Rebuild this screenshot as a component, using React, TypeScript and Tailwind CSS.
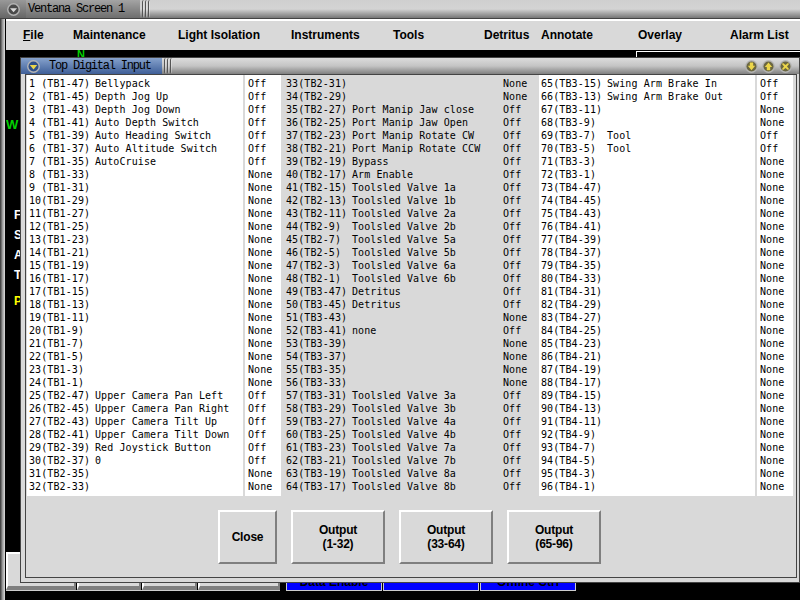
type Row = [string, string, string];

const col1: Row[] = [
  ["1 (TB1-47)", "Bellypack", "Off"],
  ["2 (TB1-45)", "Depth Jog Up", "Off"],
  ["3 (TB1-43)", "Depth Jog Down", "Off"],
  ["4 (TB1-41)", "Auto Depth Switch", "Off"],
  ["5 (TB1-39)", "Auto Heading Switch", "Off"],
  ["6 (TB1-37)", "Auto Altitude Switch", "Off"],
  ["7 (TB1-35)", "AutoCruise", "Off"],
  ["8 (TB1-33)", "", "None"],
  ["9 (TB1-31)", "", "None"],
  ["10(TB1-29)", "", "None"],
  ["11(TB1-27)", "", "None"],
  ["12(TB1-25)", "", "None"],
  ["13(TB1-23)", "", "None"],
  ["14(TB1-21)", "", "None"],
  ["15(TB1-19)", "", "None"],
  ["16(TB1-17)", "", "None"],
  ["17(TB1-15)", "", "None"],
  ["18(TB1-13)", "", "None"],
  ["19(TB1-11)", "", "None"],
  ["20(TB1-9)", "", "None"],
  ["21(TB1-7)", "", "None"],
  ["22(TB1-5)", "", "None"],
  ["23(TB1-3)", "", "None"],
  ["24(TB1-1)", "", "None"],
  ["25(TB2-47)", "Upper Camera Pan Left", "Off"],
  ["26(TB2-45)", "Upper Camera Pan Right", "Off"],
  ["27(TB2-43)", "Upper Camera Tilt Up", "Off"],
  ["28(TB2-41)", "Upper Camera Tilt Down", "Off"],
  ["29(TB2-39)", "Red Joystick Button", "Off"],
  ["30(TB2-37)", "0", "Off"],
  ["31(TB2-35)", "", "None"],
  ["32(TB2-33)", "", "None"],
];

const col2: Row[] = [
  ["33(TB2-31)", "", "None"],
  ["34(TB2-29)", "", "None"],
  ["35(TB2-27)", "Port Manip Jaw close", "Off"],
  ["36(TB2-25)", "Port Manip Jaw Open", "Off"],
  ["37(TB2-23)", "Port Manip Rotate CW", "Off"],
  ["38(TB2-21)", "Port Manip Rotate CCW", "Off"],
  ["39(TB2-19)", "Bypass", "Off"],
  ["40(TB2-17)", "Arm Enable", "Off"],
  ["41(TB2-15)", "Toolsled Valve 1a", "Off"],
  ["42(TB2-13)", "Toolsled Valve 1b", "Off"],
  ["43(TB2-11)", "Toolsled Valve 2a", "Off"],
  ["44(TB2-9)", "Toolsled Valve 2b", "Off"],
  ["45(TB2-7)", "Toolsled Valve 5a", "Off"],
  ["46(TB2-5)", "Toolsled Valve 5b", "Off"],
  ["47(TB2-3)", "Toolsled Valve 6a", "Off"],
  ["48(TB2-1)", "Toolsled Valve 6b", "Off"],
  ["49(TB3-47)", "Detritus", "Off"],
  ["50(TB3-45)", "Detritus", "Off"],
  ["51(TB3-43)", "", "None"],
  ["52(TB3-41)", "none", "Off"],
  ["53(TB3-39)", "", "None"],
  ["54(TB3-37)", "", "None"],
  ["55(TB3-35)", "", "None"],
  ["56(TB3-33)", "", "None"],
  ["57(TB3-31)", "Toolsled Valve 3a", "Off"],
  ["58(TB3-29)", "Toolsled Valve 3b", "Off"],
  ["59(TB3-27)", "Toolsled Valve 4a", "Off"],
  ["60(TB3-25)", "Toolsled Valve 4b", "Off"],
  ["61(TB3-23)", "Toolsled Valve 7a", "Off"],
  ["62(TB3-21)", "Toolsled Valve 7b", "Off"],
  ["63(TB3-19)", "Toolsled Valve 8a", "Off"],
  ["64(TB3-17)", "Toolsled Valve 8b", "Off"],
];

const col3: Row[] = [
  ["65(TB3-15)", "Swing Arm Brake In", "Off"],
  ["66(TB3-13)", "Swing Arm Brake Out", "Off"],
  ["67(TB3-11)", "", "None"],
  ["68(TB3-9)", "", "None"],
  ["69(TB3-7)", "Tool", "Off"],
  ["70(TB3-5)", "Tool", "Off"],
  ["71(TB3-3)", "", "None"],
  ["72(TB3-1)", "", "None"],
  ["73(TB4-47)", "", "None"],
  ["74(TB4-45)", "", "None"],
  ["75(TB4-43)", "", "None"],
  ["76(TB4-41)", "", "None"],
  ["77(TB4-39)", "", "None"],
  ["78(TB4-37)", "", "None"],
  ["79(TB4-35)", "", "None"],
  ["80(TB4-33)", "", "None"],
  ["81(TB4-31)", "", "None"],
  ["82(TB4-29)", "", "None"],
  ["83(TB4-27)", "", "None"],
  ["84(TB4-25)", "", "None"],
  ["85(TB4-23)", "", "None"],
  ["86(TB4-21)", "", "None"],
  ["87(TB4-19)", "", "None"],
  ["88(TB4-17)", "", "None"],
  ["89(TB4-15)", "", "None"],
  ["90(TB4-13)", "", "None"],
  ["91(TB4-11)", "", "None"],
  ["92(TB4-9)", "", "None"],
  ["93(TB4-7)", "", "None"],
  ["94(TB4-5)", "", "None"],
  ["95(TB4-3)", "", "None"],
  ["96(TB4-1)", "", "None"],
];

// widths are the distance to the next menu title
const menus = [
  { label: "Maintenance", w: "w-[105px]" },
  { label: "Light Isolation", w: "w-[113px]" },
  { label: "Instruments", w: "w-[102px]" },
  { label: "Tools", w: "w-[91px]" },
  { label: "Detritus", w: "w-[57px]" },
  { label: "Annotate", w: "w-[97px]" },
  { label: "Overlay", w: "w-[92px]" },
  { label: "Alarm List", w: "w-[65px]" },
];

const raised = "bg-[#d9d9d9] border-2 border-t-white border-l-white border-r-[#7f7f7f] border-b-[#7f7f7f]";

function Ridges() {
  return (
    <div className="flex h-full items-center gap-[1px] ml-[2px]">
      <div className="w-[2px] h-full rounded-l-full border-l border-[#555] bg-white/30" />
      <div className="w-[2px] h-full rounded-l-full border-l border-[#555] bg-white/30" />
      <div className="w-[2px] h-full rounded-l-full border-l border-[#555] bg-white/30" />
    </div>
  );
}

function WinButton({ kind }: { kind: "down" | "up" | "close" | "menu" | "grey" }) {
  const inner = kind === "grey" ? "#4a4a4a" : kind === "menu" ? "#2f4f88" : "#6a6640";
  return (
    <svg width="13" height="13" viewBox="0 0 13 13">
      <circle cx="6.5" cy="6.5" r="6.4" fill="#b4b4b4" />
      <circle cx="6.5" cy="6.5" r="5" fill={inner} />
      {kind === "down" && <path d="M4.8 2.5h3.4v3.2h2L6.5 10.2 2.8 5.7h2z" fill="#ecd64a" />}
      {kind === "up" && <path d="M6.5 2.6l3.7 4.5h-2v3.2H4.8V7.1h-2z" fill="#ecd64a" />}
      {kind === "close" && <path d="M4 3l2.5 2 2.5-2 1 1-2 2.5 2 2.5-1 1-2.5-2-2.5 2-1-1 2-2.5-2-2.5z" fill="#ecd64a" />}
      {kind === "menu" && <path d="M2.8 5h7.4l-3.7 4.4z" fill="#ecd64a" />}
      {kind === "grey" && <path d="M3 5.2h7L6.5 9.2z" fill="#d8d8d8" />}
    </svg>
  );
}

function SignalList({ rows, textBox, statusBox }: { rows: Row[]; textBox: string; statusBox: string }) {
  return (
    <div className="flex gap-[2px] shrink-0">
      <div className={`${textBox} h-[421px] pt-[2px]`}>
        {rows.map((r) => (
          <div key={r[0]} className="flex h-[13px] items-center whitespace-pre">
            <span className="w-[66px] shrink-0">{r[0]}</span>
            <span>{r[1]}</span>
          </div>
        ))}
      </div>
      <div className={`${statusBox} h-[421px] pt-[2px]`}>
        {rows.map((r) => (
          <div key={r[0]} className="flex h-[13px] items-center">
            {r[2]}
          </div>
        ))}
      </div>
    </div>
  );
}

function DialogButton({ label, w }: { label: string; w: string }) {
  return (
    <button className={`${w} h-[54px] ${raised} text-[12px] leading-[14px] tracking-[-0.2px] font-bold text-black whitespace-pre-line text-center`}>
      {label}
    </button>
  );
}

export default function App() {
  return (
    <div className="relative w-[800px] h-[600px] overflow-hidden bg-black font-['Liberation_Sans',sans-serif]">
      {/* main window frame */}
      <div className="absolute left-0 top-0 w-[5px] h-[600px] bg-gradient-to-r from-[#333] via-[#999] to-[#ddd]" />

      <div className="absolute left-0 top-0 w-[800px] flex flex-col">
        <div className="h-[19px] flex items-center border-b border-[#444] bg-gradient-to-b from-[#cfcfcf] via-[#d4d4d4] to-[#777]">
          <div className="w-[26px] h-full bg-gradient-to-b from-[#999] to-[#666] flex items-center justify-center">
            <WinButton kind="grey" />
          </div>
          <div className="w-[114px] h-full bg-gradient-to-b from-[#a4a4a4] to-[#6e6e6e] text-[12px] text-black flex items-center font-['Liberation_Mono',monospace] tracking-[-1.2px] whitespace-pre pl-[2px]">
            Ventana Screen 1
          </div>
          <Ridges />
        </div>
        <div className="ml-[6px] h-[31px] bg-[#d9d9d9] border-t-2 border-white flex items-center pl-[17px] pb-[2px] text-[12px] font-bold text-black">
          <span className="w-[50px] shrink-0">
            <span className="underline">F</span>ile
          </span>
          {menus.map((m) => (
            <span key={m.label} className={`${m.w} shrink-0 whitespace-nowrap`}>
              {m.label}
            </span>
          ))}
        </div>
      </div>
      <div className="absolute left-[636px] top-[51px] w-[164px] h-[6px] border-t border-l border-white" />

      {/* instrument labels behind the dialog */}
      <span className="absolute left-[77px] top-[51px] h-[6px] text-[11px] font-bold text-[#00d000] leading-[6px]">N</span>
      <span className="absolute left-[6px] top-[118px] text-[13px] font-bold text-[#00d000] leading-none">W</span>
      <span className="absolute left-[14px] top-[209px] text-[12px] font-bold text-white leading-none">F</span>
      <span className="absolute left-[14px] top-[229px] text-[12px] font-bold text-white leading-none">S</span>
      <span className="absolute left-[14px] top-[249px] text-[12px] font-bold text-white leading-none">A</span>
      <span className="absolute left-[14px] top-[269px] text-[12px] font-bold text-white leading-none">T</span>
      <span className="absolute left-[14px] top-[295px] text-[12px] font-bold text-[#ffff00] leading-none">P</span>

      {/* bottom panels, mostly covered by the dialog */}
      <div className="absolute left-[6px] top-[552px] w-[274px] h-[39px] flex gap-[1px] border-b border-[#ccc]">
        <div className={`w-[70px] ${raised} border-b-4`} />
        <div className={`w-[64px] ${raised} border-b-4`} />
        <div className={`w-[55px] ${raised} border-b-4`} />
        <div className={`w-[82px] ${raised} border-b-4`} />
      </div>
      <div className="absolute left-[286px] top-[570px] h-[21px] flex gap-[1px] text-[12px] font-bold text-black">
        <div className="w-[96px] bg-[#0000ff] border-b border-l border-r border-[#ccc] flex justify-center pt-[3px]">Data Enable</div>
        <div className="w-[96px] bg-[#0000ff] border-b border-l border-r border-[#ccc]" />
        <div className="w-[96px] bg-[#0000ff] border-b border-l border-r border-[#ccc] flex justify-center pt-[3px]">Offline Ctrl</div>
      </div>

      {/* dialog */}
      <div className="absolute left-[20px] top-[57px] w-[780px] h-[526px] bg-[#d9d9d9] border border-[#444] flex flex-col">
        <div className="h-[16px] shrink-0 flex items-center bg-gradient-to-b from-[#dcdcdc] via-[#c4c4c4] to-[#808080]">
          <div className="w-[141px] h-full flex items-center bg-gradient-to-b from-[#86a2cc] to-[#3f5f98] pl-[6px]">
            <div className="w-[22px] shrink-0">
              <WinButton kind="menu" />
            </div>
            <span className="text-[12px] text-black font-['Liberation_Mono',monospace] tracking-[-1.22px] whitespace-pre">Top Digital Input</span>
          </div>
          <Ridges />
          <div className="ml-auto flex gap-[4px] pr-[7px]">
            <WinButton kind="down" />
            <WinButton kind="up" />
            <WinButton kind="close" />
          </div>
        </div>

        <div className="flex-1 flex flex-col ml-[4px] mr-[2px] mb-[4px] border border-[#444]">
          <div className="flex pl-[1px] text-[10px] text-black font-['DejaVu_Sans_Mono',monospace] tracking-[0.09px]">
            <SignalList rows={col1} textBox="w-[216px] bg-white pl-[2px]" statusBox="w-[36px] bg-white pl-[3px]" />
            <SignalList rows={col2} textBox="w-[219px] pl-[5px]" statusBox="w-[37px] pl-[1px]" />
            <SignalList rows={col3} textBox="w-[216px] bg-white pl-[2px]" statusBox="w-[36px] bg-white pl-[3px]" />
          </div>
          <div className="flex gap-[14px] pl-[192px] pt-[14px]">
            <DialogButton label="Close" w="w-[59px]" />
            <DialogButton label={"Output\n(1-32)"} w="w-[94px]" />
            <DialogButton label={"Output\n(33-64)"} w="w-[94px]" />
            <DialogButton label={"Output\n(65-96)"} w="w-[94px]" />
          </div>
        </div>
      </div>
    </div>
  );
}
